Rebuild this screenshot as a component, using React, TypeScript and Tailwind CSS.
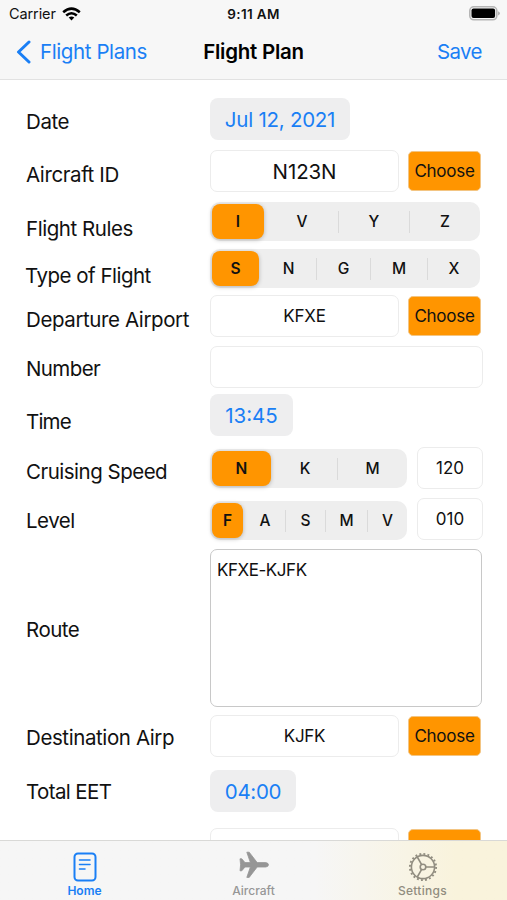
import type { ReactNode } from 'react';

type Segment = { label: string; width: string };

const flightRules: Segment[] = [
  { label: 'I', width: 'w-[56px]' },
  { label: 'V', width: 'w-[72px]' },
  { label: 'Y', width: 'w-[71px]' },
  { label: 'Z', width: 'w-[71px]' },
];

const flightTypes: Segment[] = [
  { label: 'S', width: 'w-[51px]' },
  { label: 'N', width: 'w-[55px]' },
  { label: 'G', width: 'w-[54px]' },
  { label: 'M', width: 'w-[57px]' },
  { label: 'X', width: 'w-[53px]' },
];

const speedUnits: Segment[] = [
  { label: 'N', width: 'w-[63px]' },
  { label: 'K', width: 'w-[64px]' },
  { label: 'M', width: 'w-[70px]' },
];

const levelUnits: Segment[] = [
  { label: 'F', width: 'w-[35px]' },
  { label: 'A', width: 'w-[40px]' },
  { label: 'S', width: 'w-[40px]' },
  { label: 'M', width: 'w-[42px]' },
  { label: 'V', width: 'w-[40px]' },
];

function Row({ label, className, labelClass, children }: {
  label: string;
  className: string;
  labelClass: string;
  children: ReactNode;
}) {
  return (
    <div className={`flex shrink-0 items-start ${className}`}>
      <div className={`w-[184px] shrink-0 whitespace-nowrap text-[20.5px] leading-7 ${labelClass}`}>
        {label}
      </div>
      {children}
    </div>
  );
}

function SegmentedControl({ items, className }: { items: Segment[]; className?: string }) {
  return (
    <div className={`flex h-[39px] rounded-[10px] bg-[#eeeeee] text-[15.5px] font-medium ${className ?? ''}`}>
      {items.map((item, i) =>
        i === 0 ? (
          <div key={item.label} className={`p-[2px] ${item.width}`}>
            <div className="flex h-full items-center justify-center rounded-[8px] bg-[#ff9500] font-semibold shadow-[0_1px_4px_rgba(0,0,0,0.25)]">
              {item.label}
            </div>
          </div>
        ) : (
          <div key={item.label} className={`flex items-center ${item.width}`}>
            {i > 1 && <div className="h-[22px] w-px bg-[#dadada]" />}
            <div className="flex-1 text-center">{item.label}</div>
          </div>
        )
      )}
    </div>
  );
}

function Field({ children, className }: { children?: ReactNode; className: string }) {
  return (
    <div className={`flex h-[42px] items-center justify-center rounded-[7px] border border-[#ececec] bg-white pt-[2px] ${className}`}>
      {children}
    </div>
  );
}

function ChooseButton({ children }: { children?: ReactNode }) {
  return (
    <button className="ml-[9px] mt-px h-10 w-[73px] rounded-[5px] border border-[#f3c583] bg-[#ff9500] pt-[2px] text-[17px] tracking-[-0.25px]">
      {children}
    </button>
  );
}

function DateButton({ children, className }: { children: ReactNode; className: string }) {
  return (
    <button className={`h-[42px] rounded-[8px] bg-[#eeeeef] pt-[2px] text-[20.5px] text-[#1a7ff5] ${className}`}>
      {children}
    </button>
  );
}

export default function App() {
  return (
    <div className="flex h-[900px] w-[507px] flex-col overflow-hidden bg-white font-['Inter',sans-serif] text-[#111111]">
      <header className="h-20 shrink-0 border-b border-[#e2e2e2] bg-[#f7f7f7]">
        <div className="grid h-7 grid-cols-3 items-center px-[9px] text-[13.5px]">
          <div className="flex items-center gap-[6px]">
            <span className="text-[14.5px] tracking-[-0.1px]">Carrier</span>
            <svg width="19" height="14" viewBox="0 0 19 14" fill="none" stroke="#000" strokeWidth="2.6">
              <path d="M1.2 5.2Q9.5 -2 17.8 5.2" />
              <path d="M4.2 8.5Q9.5 4 14.8 8.5" />
              <path d="M6.7 10.6Q9.5 8.3 12.3 10.6L9.5 13.4Z" fill="#000" stroke="none" />
            </svg>
          </div>
          <span className="whitespace-nowrap text-center font-semibold tracking-[0.35px]">9:11 AM</span>
          <svg className="mb-[2px] mr-[-2px] justify-self-end" width="31" height="15" viewBox="0 0 31 15">
            <rect x="0.8" y="0.8" width="27" height="13" rx="4" fill="#f7f7f7" stroke="#b5b5b5" strokeWidth="1.6" />
            <rect x="2.5" y="2.5" width="23.6" height="9.6" rx="2" fill="#000" />
            <path d="M29 5.2Q31 6 31 7.3T29 9.4Z" fill="#b5b5b5" />
          </svg>
        </div>
        <div className="grid h-12 grid-cols-3 items-center pl-4 pr-[25px] text-[20.5px]">
          <div className="flex items-center gap-[9px] whitespace-nowrap text-[#1a7ff5]">
            <svg width="15" height="24" viewBox="0 0 15 24" fill="none" stroke="currentColor" strokeWidth="3" strokeLinecap="round" strokeLinejoin="round">
              <path d="M13 2L2.5 12L13 22" />
            </svg>
            <span className="pt-px tracking-[-0.4px]">Flight Plans</span>
          </div>
          <span className="pl-[9px] pt-px text-center font-semibold tracking-[-0.25px] text-black">Flight Plan</span>
          <span className="pt-px text-right tracking-[-0.6px] text-[#1a7ff5]">Save</span>
        </div>
      </header>

      <main className="flex flex-1 flex-col overflow-hidden pl-[26px] pt-[18px]">
        <Row label="Date" className="h-[52px]" labelClass="pt-[10px] tracking-[-0.4px]">
          <DateButton className="w-[140px] tracking-[-0.25px]">Jul 12, 2021</DateButton>
        </Row>
        <Row label="Aircraft ID" className="h-[52px]" labelClass="pt-[11px] tracking-[-0.4px]">
          <Field className="w-[189px] text-[20.5px] tracking-[-0.1px]">N123N</Field>
          <ChooseButton>Choose</ChooseButton>
        </Row>
        <Row label="Flight Rules" className="h-[47px]" labelClass="pt-[13px] tracking-[-0.45px]">
          <SegmentedControl items={flightRules} />
        </Row>
        <Row label="Type of Flight" className="h-[46px]" labelClass="-ml-px mr-px pt-[13px] tracking-[-0.5px]">
          <SegmentedControl items={flightTypes} />
        </Row>
        <Row label="Departure Airport" className="h-[51px]" labelClass="pt-[11px] tracking-[-0.4px]">
          <Field className="w-[189px] text-[17px] tracking-[-0.2px]">KFXE</Field>
          <ChooseButton>Choose</ChooseButton>
        </Row>
        <Row label="Number" className="h-12" labelClass="pt-[9px] tracking-[-0.6px]">
          <Field className="w-[273px]" />
        </Row>
        <Row label="Time" className="h-[53px]" labelClass="pt-[14px] tracking-[-0.8px]">
          <DateButton className="w-[83px]">13:45</DateButton>
        </Row>
        <Row label="Cruising Speed" className="h-[51px]" labelClass="pt-[11px] tracking-[-0.5px]">
          <SegmentedControl items={speedUnits} className="mt-[2px]" />
          <Field className="ml-[10px] w-[66px] text-[17px]">120</Field>
        </Row>
        <Row label="Level" className="h-[51px]" labelClass="pt-[9px] tracking-[-0.5px]">
          <SegmentedControl items={levelUnits} className="mt-[3px]" />
          <Field className="ml-[10px] w-[66px] text-[17px]">010</Field>
        </Row>
        <Row label="Route" className="h-[166px]" labelClass="pt-[67px] tracking-[-0.5px]">
          <div className="h-[158px] w-[272px] rounded-[7px] border border-[#c8c8c8] px-[6px] pt-[8px] text-[17px] leading-6 tracking-[-0.45px]">
            KFXE-KJFK
          </div>
        </Row>
        <Row label="Destination Airp" className="h-[55px]" labelClass="pt-[9px] tracking-[-0.4px]">
          <Field className="w-[189px] text-[17px] tracking-[-0.3px]">KJFK</Field>
          <ChooseButton>Choose</ChooseButton>
        </Row>
        <Row label="Total EET" className="h-[58px]" labelClass="pt-[8px] tracking-[-0.6px]">
          <DateButton className="w-[86px] tracking-[-0.3px]">04:00</DateButton>
        </Row>
        <Row label="" className="h-[42px]" labelClass="">
          <Field className="w-[189px]" />
          <ChooseButton />
        </Row>
      </main>

      <nav className="grid h-[60px] shrink-0 grid-cols-3 border-t border-[#d9d9d7] bg-linear-to-r from-[#f6f6f6] from-62% to-[#f9f3dc] to-90% text-xs font-medium text-[#969696]">
        <div className="flex flex-col items-center pt-[11px] text-[#1a7ff5]">
          <svg width="24" height="30" viewBox="0 0 24 30" fill="none" stroke="currentColor" strokeWidth="2" strokeLinecap="round">
            <rect x="1.5" y="1.5" width="21" height="27" rx="3.5" />
            <path d="M6.5 8H17M6.5 12.5H17M6.5 17H12" strokeWidth="1.6" />
          </svg>
          <span className="font-semibold leading-[18px]">Home</span>
        </div>
        <div className="flex flex-col items-center pt-[9px]">
          <svg width="30" height="30" viewBox="0 0 30 30" fill="currentColor" stroke="currentColor" strokeWidth="0.8" strokeLinejoin="round">
            <path d="M1 8.8H2.8L6 12.6H11.4L7.8 2.2H10.2L18.2 12.6H26.8Q29.5 13 29.5 14.8T26.8 17H18.2L10.2 27.4H7.8L11.4 17H6L2.8 20.8H1L1.6 14.8Z" />
          </svg>
          <span className="leading-[22px]">Aircraft</span>
        </div>
        <div className="flex flex-col items-center pt-[11px] text-[#918d80]">
          <svg width="30" height="30" viewBox="0 0 30 30" fill="none" stroke="currentColor" strokeWidth="1.6">
            <circle cx="15" cy="15" r="11.6" />
            <circle cx="15" cy="15" r="13.1" strokeWidth="1.9" strokeDasharray="1.9 2.216" />
            <circle cx="15" cy="15" r="2.8" />
            <path d="M18 15H26.2M13.5 12.4L9.3 5M13.5 17.6L9.3 25" />
          </svg>
          <span className="leading-[18px] tracking-[0.3px]">Settings</span>
        </div>
      </nav>
    </div>
  );
}
